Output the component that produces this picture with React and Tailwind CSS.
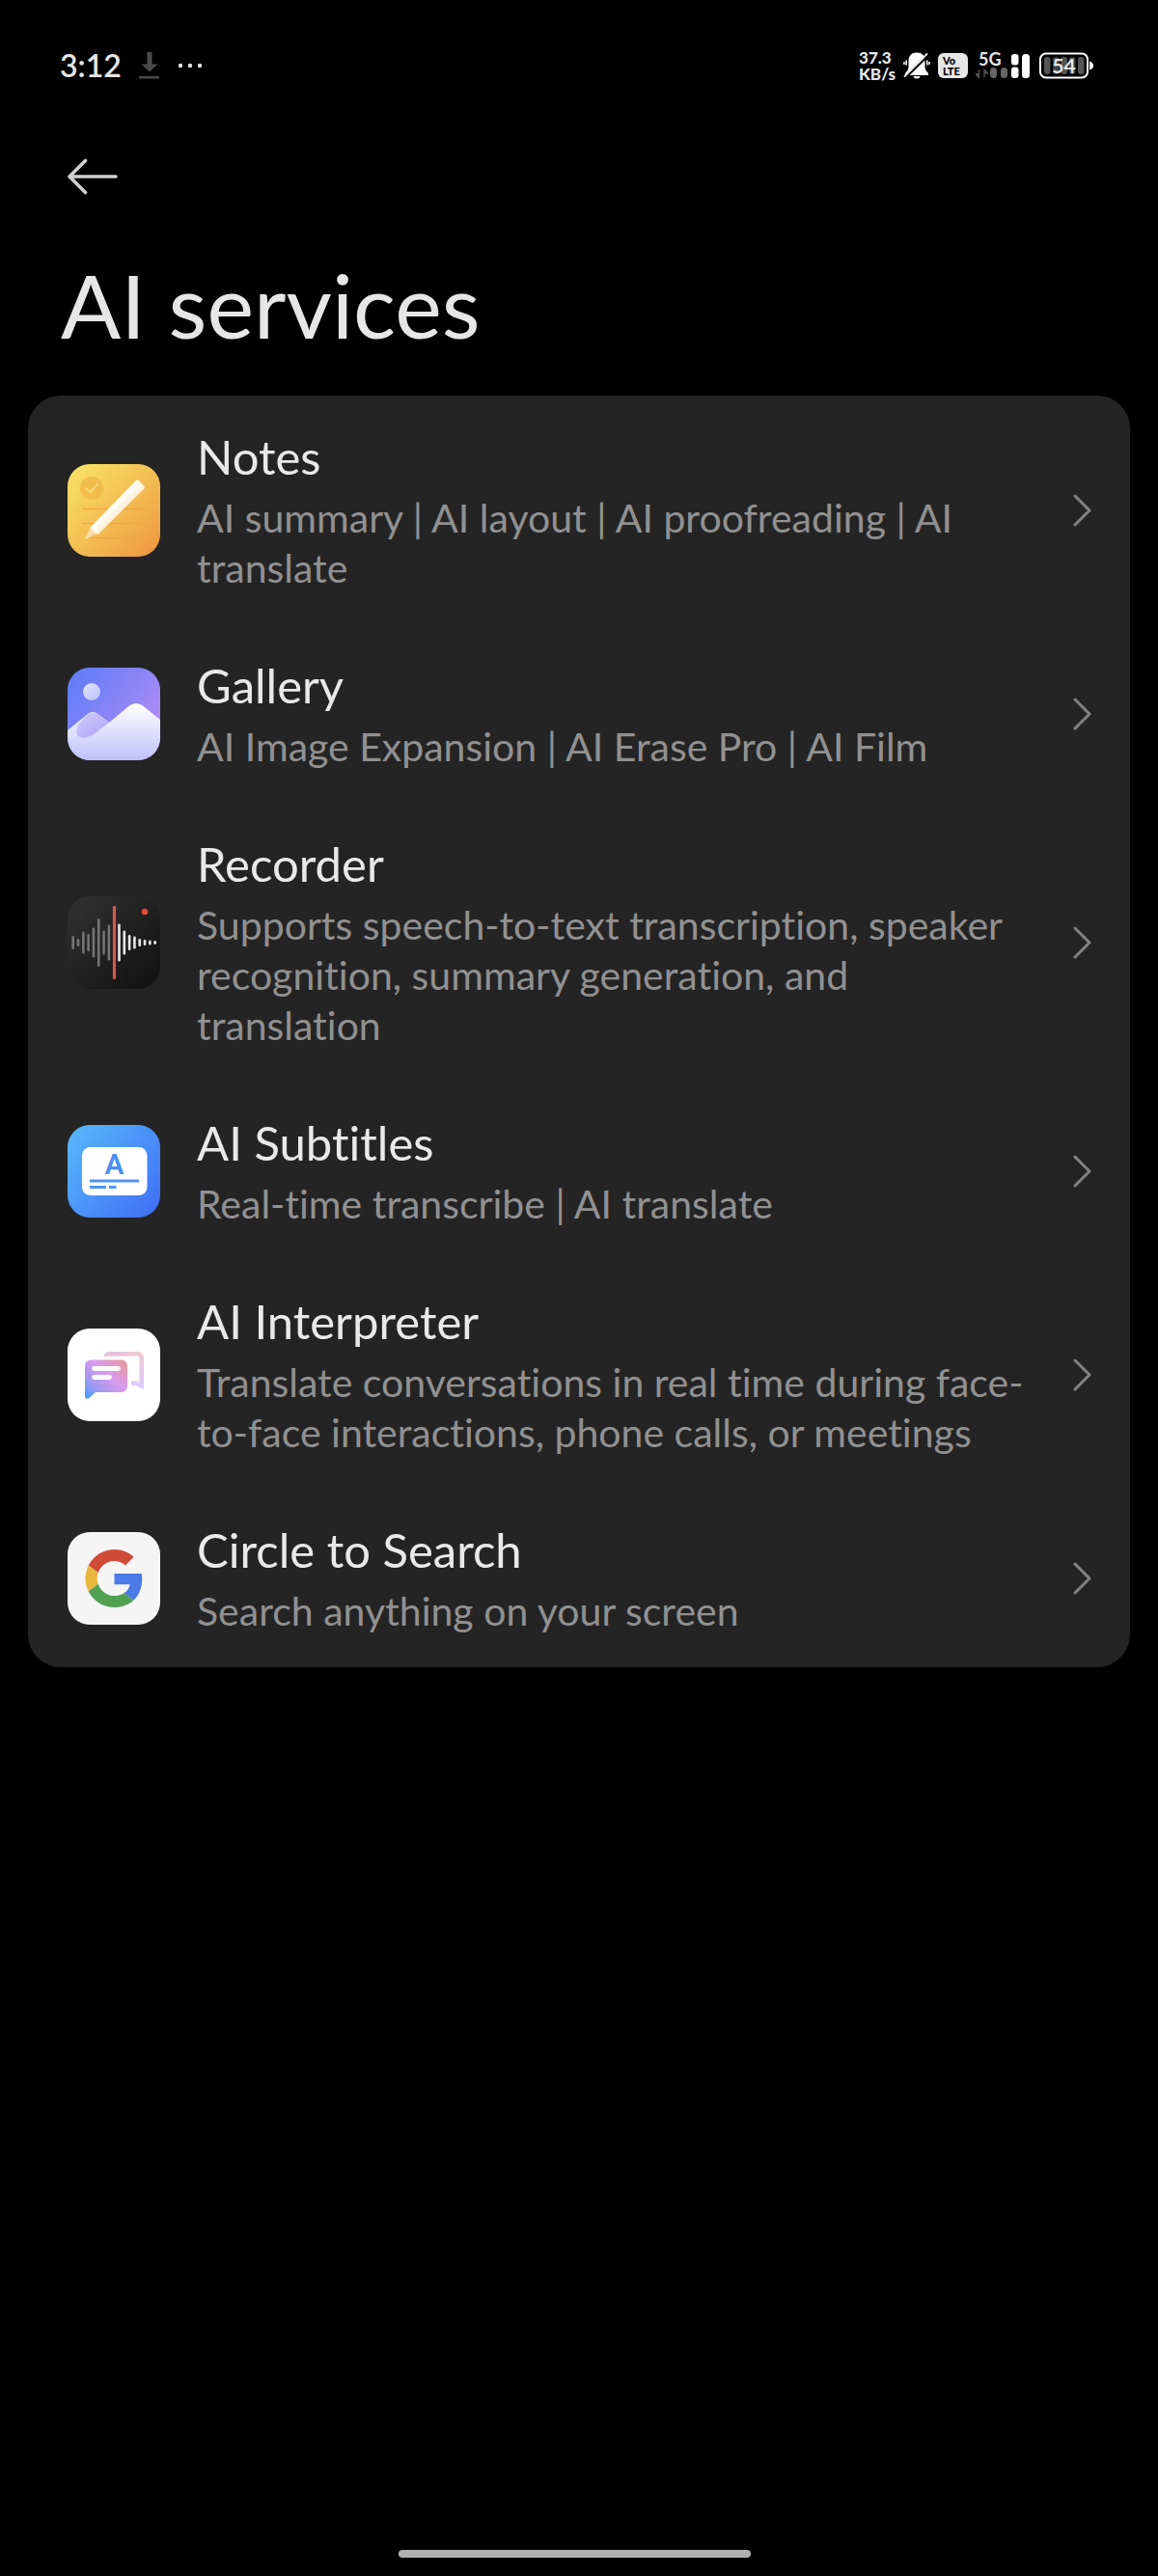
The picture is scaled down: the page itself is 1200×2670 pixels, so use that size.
import React from 'react'

const bars = [14, 8, 23, 18, 31, 50, 25, 37, 76, 39, 25, 16, 13, 8, 6, 5, 4]

function NotesIcon() {
    return (
        <svg viewBox="0 0 96 96" className="size-full">
            <defs>
                <linearGradient id="notesBg" x1="0" y1="0" x2="1" y2="1">
                    <stop offset="0" stopColor="#f8e468" />
                    <stop offset="0.5" stopColor="#f3bf54" />
                    <stop offset="1" stopColor="#f0953f" />
                </linearGradient>
                <linearGradient id="pencil" x1="0.35" y1="0.35" x2="0.62" y2="0.62">
                    <stop offset="0" stopColor="#ffffff" />
                    <stop offset="0.5" stopColor="#fffaf0" />
                    <stop offset="1" stopColor="#fbe6c4" />
                </linearGradient>
            </defs>
            <rect width="96" height="96" fill="url(#notesBg)" />
            <circle cx="25" cy="25" r="12" fill="#f1bc4b" />
            <path d="M19.5 25.5l4 4L31 20.5" fill="none" stroke="#f8d775" strokeWidth="2" strokeLinecap="round" strokeLinejoin="round" />
            <path d="M15 46.5h66M15 61.5h66M22 76.5h55" stroke="#eda944" strokeWidth="1.6" />
            <path d="M24 65l6.500 7.200-11 5.600q-1.800.5-1.200-1.200z" fill="#fbdca8" />
            <path d="M24.200 65L70.500 17.500q1.800-1.800 3.600 0l5 5q1.600 1.800 0 3.400L32 72.500q-1 .9-2 0l-5.800-5.700q-.9-.9 0-1.800z" fill="url(#pencil)" />
        </svg>
    )
}

function GalleryIcon() {
    return (
        <svg viewBox="0 0 96 96" className="size-full">
            <defs>
                <linearGradient id="sky" x1="0.1" y1="0" x2="0.9" y2="0.6">
                    <stop offset="0" stopColor="#607df8" />
                    <stop offset="0.6" stopColor="#8b84f6" />
                    <stop offset="1" stopColor="#aa8cf5" />
                </linearGradient>
                <linearGradient id="snow" x1="0" y1="0" x2="0" y2="1">
                    <stop offset="0" stopColor="#ffffff" />
                    <stop offset="1" stopColor="#c0c0fb" />
                </linearGradient>
                <linearGradient id="moon" x1="0" y1="0" x2="1" y2="1">
                    <stop offset="0" stopColor="#e2e6ff" />
                    <stop offset="1" stopColor="#bcc0fc" />
                </linearGradient>
                <linearGradient id="valley" x1="0" y1="0" x2="1" y2="1">
                    <stop offset="0" stopColor="#d3cffc" />
                    <stop offset="1" stopColor="#ab9ef5" />
                </linearGradient>
            </defs>
            <rect width="96" height="96" fill="url(#sky)" />
            <circle cx="25" cy="25" r="9" fill="url(#moon)" />
            <path d="M0 65L21 48q5-4 10 0l12 9 21-17.500q7-5 14 0L96 54v42H0z" fill="url(#snow)" />
            <path d="M43 57L30.500 48q-4.500-3-9 .3L15 54q-6 6-6 12 0 7 8 7 5 0 12-5z" fill="url(#valley)" stroke="#ddd9fd" strokeWidth="0.7" />
        </svg>
    )
}

function RecorderIcon() {
    return (
        <svg viewBox="0 0 96 96" className="size-full">
            <defs>
                <linearGradient id="recBg" x1="0" y1="0" x2="1" y2="1">
                    <stop offset="0" stopColor="#323232" />
                    <stop offset="1" stopColor="#101010" />
                </linearGradient>
            </defs>
            <rect width="96" height="96" fill="url(#recBg)" />
            {bars.map((h, i) => (
                <rect
                    key={i}
                    x={4.4 + i * 5.31}
                    y={48 - h / 2}
                    width={i === 8 ? 3.2 : 2.6}
                    height={h}
                    rx="1.3"
                    fill={i < 8 ? '#747474' : i === 8 ? '#d4564a' : '#e8e8e8'}
                />
            ))}
            <circle cx="80" cy="16" r="3.3" fill="#e04a34" />
        </svg>
    )
}

function SubtitlesIcon() {
    return (
        <svg viewBox="0 0 96 96" className="size-full">
            <defs>
                <linearGradient id="subBg" x1="0" y1="0.1" x2="1" y2="0.9">
                    <stop offset="0" stopColor="#58b6fc" />
                    <stop offset="1" stopColor="#3f70f6" />
                </linearGradient>
            </defs>
            <rect width="96" height="96" fill="url(#subBg)" />
            <rect x="15" y="23" width="67.500" height="50" rx="8.500" fill="#fff" />
            <text x="48.500" y="51" textAnchor="middle" fontFamily="Roboto, sans-serif" fontWeight="600" fontSize="30" fill="#4a8ff0">A</text>
            <path d="M23 58h51M23 64.500h17M43 64.500h7.500" stroke="#4f94ef" strokeWidth="3.200" />
        </svg>
    )
}

function InterpreterIcon() {
    return (
        <svg viewBox="0 0 96 96" className="size-full">
            <defs>
                <linearGradient id="bubble" x1="0" y1="1" x2="0.9" y2="0.1">
                    <stop offset="0.05" stopColor="#4c9bfb" />
                    <stop offset="0.3" stopColor="#a09af0" />
                    <stop offset="0.65" stopColor="#d89af0" />
                    <stop offset="1" stopColor="#e59aa8" />
                </linearGradient>
                <linearGradient id="bubbleBack" x1="0" y1="0" x2="0.5" y2="1">
                    <stop offset="0" stopColor="#dfc0e4" />
                    <stop offset="0.4" stopColor="#f2c8d0" />
                    <stop offset="1" stopColor="#dccbfb" />
                </linearGradient>
            </defs>
            <rect width="96" height="96" fill="#fff" />
            <path d="M37 29q2-5 7-5h28q7 0 7 7v30q0 2-2 1.500l-6-3.500h-5v-4.500h6l2.500 1.500V31q0-2.500-2.500-2.500z" fill="url(#bubbleBack)" />
            <path d="M24.500 32.500h31q6.500 0 6.500 6.500v20.500q0 6.500-6.500 6.500H29l-6.500 6q-4.500 2.500-4.500-2.500V39q0-6.500 6.500-6.500z" fill="url(#bubble)" />
            <path d="M27.500 41.500h25M27.500 50.500h16" stroke="#fff" strokeWidth="4.800" strokeLinecap="round" />
        </svg>
    )
}

function GoogleIcon() {
    return (
        <svg viewBox="0 0 96 96" className="size-full">
            <rect width="96" height="96" fill="#f5f5f5" />
            <g transform="translate(18.5 18) scale(1.25)">
                <path fill="#d04b37" d="M24 9.5c3.54 0 6.71 1.22 9.21 3.6l6.85-6.85C35.9 2.38 30.47 0 24 0 14.62 0 6.51 5.38 2.56 13.22l7.98 6.19C12.43 13.72 17.74 9.5 24 9.5z" />
                <path fill="#4a7be6" d="M46.98 24.55c0-1.57-.15-3.09-.38-4.55H24v9.02h12.94c-.58 2.96-2.26 5.48-4.78 7.18l7.73 6c4.51-4.18 7.09-10.36 7.09-17.65z" />
                <path fill="#e8b73e" d="M10.53 28.59c-.48-1.45-.76-2.99-.76-4.59s.27-3.14.76-4.59l-7.98-6.19C.92 16.46 0 20.12 0 24c0 3.88.92 7.54 2.56 10.78l7.97-6.19z" />
                <path fill="#51a153" d="M24 48c6.48 0 11.93-2.13 15.89-5.81l-7.73-6c-2.15 1.45-4.92 2.3-8.16 2.3-6.26 0-11.57-4.22-13.47-9.91l-7.98 6.19C6.51 42.62 14.62 48 24 48z" />
            </g>
        </svg>
    )
}

const services = [
    { name: 'Notes', desc: 'AI summary | AI layout | AI proofreading | AI translate', Icon: NotesIcon },
    { name: 'Gallery', desc: 'AI Image Expansion | AI Erase Pro | AI Film', Icon: GalleryIcon },
    { name: 'Recorder', desc: 'Supports speech-to-text transcription, speaker recognition, summary generation, and translation', Icon: RecorderIcon },
    { name: 'AI Subtitles', desc: 'Real-time transcribe | AI translate', Icon: SubtitlesIcon },
    { name: 'AI Interpreter', desc: 'Translate conversations in real time during face-to-face interactions, phone calls, or meetings', Icon: InterpreterIcon },
    { name: 'Circle to Search', desc: 'Search anything on your screen', Icon: GoogleIcon },
]

function StatusBar() {
    return (
        <div className="flex h-[136px] items-center justify-between pl-[62px] pr-[67px] text-[#e6e6e6]">
            <div className="flex items-center">
                <span className="text-[32px] font-semibold leading-9">3:12</span>
                <svg viewBox="0 0 22 28" className="ml-[18px] h-7 w-[22px]" fill="#4a4a4a">
                    <path d="M8.500 0h5v12.500H19.500L11 20.500 2.500 12.500h6zM0 25h21v2.500H0z" />
                </svg>
                <svg viewBox="0 0 26 6" className="ml-[18px] h-1.5 w-[26px]" fill="currentColor">
                    <circle cx="3" cy="3" r="2.2" />
                    <circle cx="13" cy="3" r="2.2" />
                    <circle cx="23" cy="3" r="2.2" />
                </svg>
            </div>
            <div className="flex items-center">
                <div className="flex flex-col text-[17px] font-black leading-[17px]">
                    <span>37.3</span>
                    <span>KB/s</span>
                </div>
                <svg viewBox="0 0 28 28" className="ml-2 size-7">
                    <path d="M14 .5q8.500 0 8.500 9v6q0 3 3.500 6.500.8 2-1 2H3q-1.800 0-1-2 3.500-3.500 3.500-6.500v-6Q5.500.5 14 .5z" fill="#fff" />
                    <path d="M10.500 25h7q-.5 2.500-3.500 2.500T10.500 25z" fill="#fff" />
                    <path d="M3.200 8.500v5M24.800 8.500v5M1 10v3M27 10v3" stroke="#fff" strokeWidth="1.500" />
                    <path d="M2 27L26.500 3" stroke="#000" strokeWidth="2.400" />
                    <path d="M1 25.500L25 1.500" stroke="#e6e6e6" strokeWidth="1.800" />
                </svg>
                <div className="ml-2 flex h-[26px] w-[31px] flex-col justify-center rounded-md bg-[#e6e6e6] pl-[5px] text-[11px] font-black leading-[11px] text-black">
                    <span>Vo</span>
                    <span>LTE</span>
                </div>
                <div className="relative ml-2 h-7 w-14">
                    <svg viewBox="0 0 56 28" className="size-full">
                        <path d="M3.500 18v8.500L0 22.500h3.500M9 26.500V18l3.500 4H9" fill="#555" stroke="#555" strokeWidth="1.200" />
                        <rect x="15" y="16" width="7" height="11" rx="3.500" fill="#666" />
                        <rect x="26" y="16" width="7" height="11" rx="3.500" fill="#666" />
                        <rect x="37" y="2" width="7.500" height="11.500" rx="3" fill="#fff" />
                        <rect x="37" y="15.500" width="7.500" height="11.500" rx="3" fill="#fff" />
                        <rect x="48" y="2" width="8" height="25" rx="3.500" fill="#fff" />
                    </svg>
                    <span className="absolute left-[3px] top-0 text-[18px] font-bold leading-[14px]">5G</span>
                </div>
                <div className="relative ml-2.5 h-7 w-14">
                    <svg viewBox="0 0 56 28" className="size-full">
                        <rect x="1" y="1.500" width="49" height="25" rx="6" fill="none" stroke="#fff" strokeWidth="2" />
                        <path d="M52 9.500q4 1 4 4.500t-4 4.500z" fill="#fff" />
                        <rect x="5" y="5" width="6.500" height="18" rx="3" fill="#555" />
                        <rect x="14" y="5" width="6.500" height="18" rx="3" fill="#444" />
                        <rect x="22.500" y="5" width="6.500" height="18" rx="3" fill="#555" />
                        <rect x="31" y="5" width="6.500" height="18" rx="3" fill="#444" />
                        <rect x="40" y="5" width="6.500" height="18" rx="3" fill="#555" />
                    </svg>
                    <span className="absolute inset-y-0 left-0 w-[51px] text-center text-[21px] font-bold leading-7">54</span>
                </div>
            </div>
        </div>
    )
}

function App() {
    return (
        <div className="flex min-h-screen flex-col bg-black font-['Lato',sans-serif] [font-variant-ligatures:none]">
            <StatusBar />
            <header className="px-[63px]">
                <button type="button" aria-label="Back" className="flex h-[94px] items-center pl-[7px]">
                    <svg viewBox="0 0 52 38" className="h-[38px] w-[52px]" fill="none" stroke="#d0d0d0" strokeWidth="3.600" strokeLinecap="round" strokeLinejoin="round">
                        <path d="M50 19H3M18.500 2.500L2 19l16.500 16.500" />
                    </svg>
                </button>
                <h1 className="mb-[38px] mt-[30px] text-[92px] leading-[112px] text-[#e6e6e6]">AI services</h1>
            </header>
            <main className="mx-[29px] overflow-hidden rounded-[34px] bg-[#242424]">
                <ul>
                    {services.map(({ name, desc, Icon }) => (
                        <li key={name}>
                            <a href="#" className="flex items-center pb-8 pl-[41px] pr-10 pt-[33px]">
                                <span className="size-24 shrink-0 overflow-hidden rounded-[23px]"><Icon /></span>
                                <span className="ml-[38px] mr-11 min-w-0 flex-1">
                                    <span className="mb-2 block text-[49px] leading-[60px] text-[#e9e9e9]">{name}</span>
                                    <span className="block text-[41px] leading-[52px] text-[#919191]">{desc}</span>
                                </span>
                                <svg viewBox="0 0 20 34" className="h-[34px] w-5 shrink-0" fill="none" stroke="#828282" strokeWidth="3" strokeLinecap="round" strokeLinejoin="round">
                                    <path d="M3 2l15 15L3 32" />
                                </svg>
                            </a>
                        </li>
                    ))}
                </ul>
            </main>
            <div className="mt-auto flex justify-center pb-[19px] pr-2.5">
                <div className="h-2 w-[365px] rounded-full bg-[#b0b0b0]" />
            </div>
        </div>
    )
}

export default App
